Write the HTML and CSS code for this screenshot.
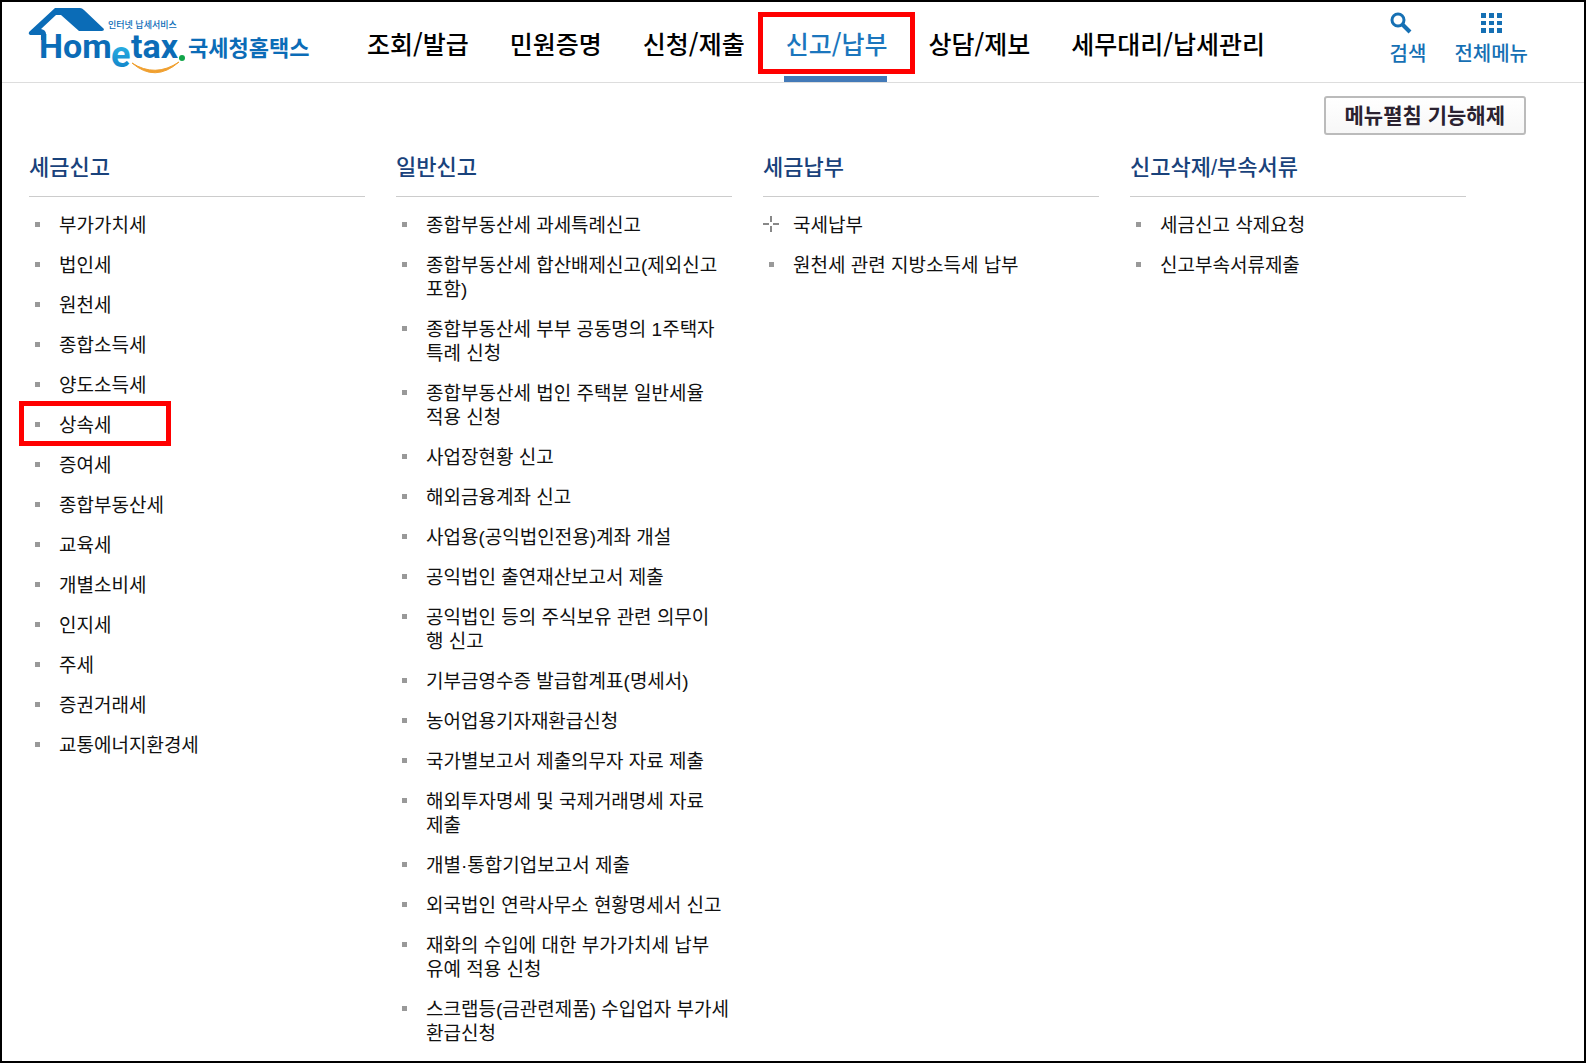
FILE: index.html
```html
<!DOCTYPE html>
<html lang="ko">
<head>
<meta charset="utf-8">
<meta name="viewport" content="width=device-width, initial-scale=1">
<title>국세청 홈택스</title>
<link rel="stylesheet" href="styles.css">
</head>
<body>
<div class="page">
  <header class="header">
    <a class="logo" href="#" aria-label="Hometax 국세청홈택스">
      <svg width="284" height="70" viewBox="28 5 284 70" aria-hidden="true">
        <defs>
          <linearGradient id="e-fill" x1="0" y1="0" x2="0" y2="1">
            <stop offset="0" stop-color="#35c3ee"/>
            <stop offset="1" stop-color="#0a78c2"/>
          </linearGradient>
        </defs>
        <path class="logo-blue" d="M55 8H80Q82 8 84 10L104 29Q104 31 102 31H79L61 15H56L41 29Q46 30 46 34V40H41V35H30Q28 34 29 32Z"/>
        <text class="logo-word logo-blue" x="39" y="58">Hom</text>
        <text class="logo-e" x="111" y="67" fill="url(#e-fill)">e</text>
        <text class="logo-word logo-blue" x="131" y="58">tax</text>
        <circle cx="182" cy="58" r="3" fill="#12a54a"/>
        <path d="M132 63Q155 83 179 62Q155 78 132 63Z" fill="#f0a030" stroke="#f0a030"/>
        <text class="logo-small logo-blue" x="108" y="28">인터넷 납세서비스</text>
        <text class="logo-korean logo-blue" x="188" y="56">국세청홈택스</text>
      </svg>
    </a>
    <nav class="nav" aria-label="주 메뉴">
      <a href="#">조회/발급</a>
      <a href="#">민원증명</a>
      <a href="#">신청/제출</a>
      <a href="#" class="active" aria-current="page">신고/납부</a>
      <a href="#">상담/제보</a>
      <a href="#">세무대리/납세관리</a>
    </nav>
    <div class="tools">
      <button class="tool" type="button">
        <svg width="22" height="22" viewBox="0 0 22 22" aria-hidden="true"><circle cx="8" cy="8" r="6" fill="none" stroke="currentColor" stroke-width="3"/><path d="M12 12L20 20" stroke="currentColor" stroke-width="4"/></svg>
        <span>검색</span>
      </button>
      <button class="tool tool-all" type="button">
        <svg width="22" height="22" viewBox="0 0 22 22" aria-hidden="true"><path fill="currentColor" d="M1 1h5v5H1zM9 1h5v5H9zM17 1h5v5h-5zM1 9h5v4H1zM9 9h5v4H9zM17 9h5v4h-5zM1 16h5v5H1zM9 16h5v5H9zM17 16h5v5h-5z"/></svg>
        <span>전체메뉴</span>
      </button>
    </div>
  </header>
  <main class="menu">
    <div class="menu-bar"><button class="toggle" type="button">메뉴펼침 기능해제</button></div>
    <div class="columns">
      <section>
        <h2>세금신고</h2>
        <ul>
          <li><a href="#">부가가치세</a></li>
          <li><a href="#">법인세</a></li>
          <li><a href="#">원천세</a></li>
          <li><a href="#">종합소득세</a></li>
          <li><a href="#">양도소득세</a></li>
          <li class="marked"><a href="#">상속세</a></li>
          <li><a href="#">증여세</a></li>
          <li><a href="#">종합부동산세</a></li>
          <li><a href="#">교육세</a></li>
          <li><a href="#">개별소비세</a></li>
          <li><a href="#">인지세</a></li>
          <li><a href="#">주세</a></li>
          <li><a href="#">증권거래세</a></li>
          <li><a href="#">교통에너지환경세</a></li>
        </ul>
      </section>
      <section>
        <h2>일반신고</h2>
        <ul>
          <li><a href="#">종합부동산세 과세특례신고</a></li>
          <li><a href="#">종합부동산세 합산배제신고(제외신고 포함)</a></li>
          <li><a href="#">종합부동산세 부부 공동명의 1주택자 특례 신청</a></li>
          <li><a href="#">종합부동산세 법인 주택분 일반세율 적용 신청</a></li>
          <li><a href="#">사업장현황 신고</a></li>
          <li><a href="#">해외금융계좌 신고</a></li>
          <li><a href="#">사업용(공익법인전용)계좌 개설</a></li>
          <li><a href="#">공익법인 출연재산보고서 제출</a></li>
          <li><a href="#">공익법인 등의 주식보유 관련 의무이<br>행 신고</a></li>
          <li><a href="#">기부금영수증 발급합계표(명세서)</a></li>
          <li><a href="#">농어업용기자재환급신청</a></li>
          <li><a href="#">국가별보고서 제출의무자 자료 제출</a></li>
          <li><a href="#">해외투자명세 및 국제거래명세 자료 제출</a></li>
          <li><a href="#">개별·통합기업보고서 제출</a></li>
          <li><a href="#">외국법인 연락사무소 현황명세서 신고</a></li>
          <li><a href="#">재화의 수입에 대한 부가가치세 납부 유예 적용 신청</a></li>
          <li><a href="#">스크랩등(금관련제품) 수입업자 부가세 환급신청</a></li>
        </ul>
      </section>
      <section>
        <h2>세금납부</h2>
        <ul>
          <li class="expandable"><a href="#">국세납부</a></li>
          <li><a href="#">원천세 관련 지방소득세 납부</a></li>
        </ul>
      </section>
      <section>
        <h2>신고삭제/부속서류</h2>
        <ul>
          <li><a href="#">세금신고 삭제요청</a></li>
          <li><a href="#">신고부속서류제출</a></li>
        </ul>
      </section>
    </div>
  </main>
</div>
</body>
</html>
```
FILE: styles.css
```css
*, *::before, *::after { box-sizing: border-box; }
body {
  margin: 0;
  background: #fff;
  color: #111;
  font-family: "Liberation Sans", "Noto Sans CJK KR", sans-serif;
}
a { color: inherit; text-decoration: none; }
button { font: inherit; cursor: pointer; }
.page { min-height: 100vh; border: 2px solid #000; }

.header {
  display: flex;
  align-items: stretch;
  height: 81px;
  padding: 0 56px 0 26px;
  border-bottom: 1px solid #ddd;
}
.logo { flex: none; padding-top: 3px; }
.logo svg { display: block; }
.logo-blue { fill: #0b6cb7; }
.logo-word { font: 700 34px Roboto, sans-serif; }
.logo-e { font: 700 36px Roboto, sans-serif; }
.logo-small { font: 500 9px "Noto Sans CJK KR", sans-serif; }
.logo-korean { font: 700 22px "Noto Sans CJK KR", sans-serif; }

.nav {
  display: flex;
  gap: 41px;
  margin-left: 55px;
  font: 500 25px/82px "Noto Sans CJK KR", sans-serif;
  color: #000;
  white-space: nowrap;
}
.nav a { position: relative; height: 80px; }
.nav .active { color: #1b76bd; }
.nav .active::before {
  content: "";
  position: absolute;
  inset: 10px -28px 8px -28px;
  border: 5px solid #f00;
}
.nav .active::after {
  content: "";
  position: absolute;
  inset: auto 0 0 -2px;
  height: 6px;
  background: #437ab8;
}

.tools { display: flex; align-items: flex-start; gap: 28px; margin-left: auto; padding-top: 10px; }
.tool {
  display: flex;
  flex-direction: column;
  gap: 5px;
  padding: 0;
  border: 0;
  background: none;
  color: #1670b4;
  font: 500 20px/28px "Noto Sans CJK KR", sans-serif;
}
.tool-all { align-items: center; }

.menu { padding: 13px 28px 12px 27px; }
.menu-bar { display: flex; justify-content: flex-end; padding-right: 30px; }
.toggle {
  height: 39px;
  padding: 0 19px 4px;
  border: 2px solid #bbb;
  border-radius: 3px;
  background: linear-gradient(#fff, #f7f7f7);
  color: #2b2230;
  font: 700 21px/32px "Noto Sans CJK KR", sans-serif;
}
.columns { display: grid; grid-template-columns: repeat(4, 336px); gap: 31px; }
h2 {
  margin: 0;
  padding: 18px 0 13px;
  border-bottom: 1px solid #ccc;
  color: #19427b;
  font-weight: 500;
  font-size: 22px;
  line-height: 30px;
}
ul {
  display: grid;
  gap: 16px;
  margin: 0;
  padding: 17px 0 0;
  list-style: none;
}
li {
  position: relative;
  padding-left: 30px;
  font-size: 19px;
  line-height: 24px;
  word-break: keep-all;
}
li::before {
  content: "";
  position: absolute;
  top: 8px;
  left: 6px;
  width: 5px;
  height: 5px;
  background: #999;
}
.expandable::before {
  top: 2px;
  left: 0;
  width: 16px;
  height: 16px;
  background:
    linear-gradient(#888, #888) 7px 0 / 2px 6px no-repeat,
    linear-gradient(#888, #888) 7px 10px / 2px 6px no-repeat,
    linear-gradient(#888, #888) 0 7px / 6px 2px no-repeat,
    linear-gradient(#888, #888) 10px 7px / 6px 2px no-repeat;
}
.marked::after {
  content: "";
  position: absolute;
  top: -13px;
  left: -10px;
  width: 152px;
  height: 45px;
  border: 5px solid #f00;
}
```
